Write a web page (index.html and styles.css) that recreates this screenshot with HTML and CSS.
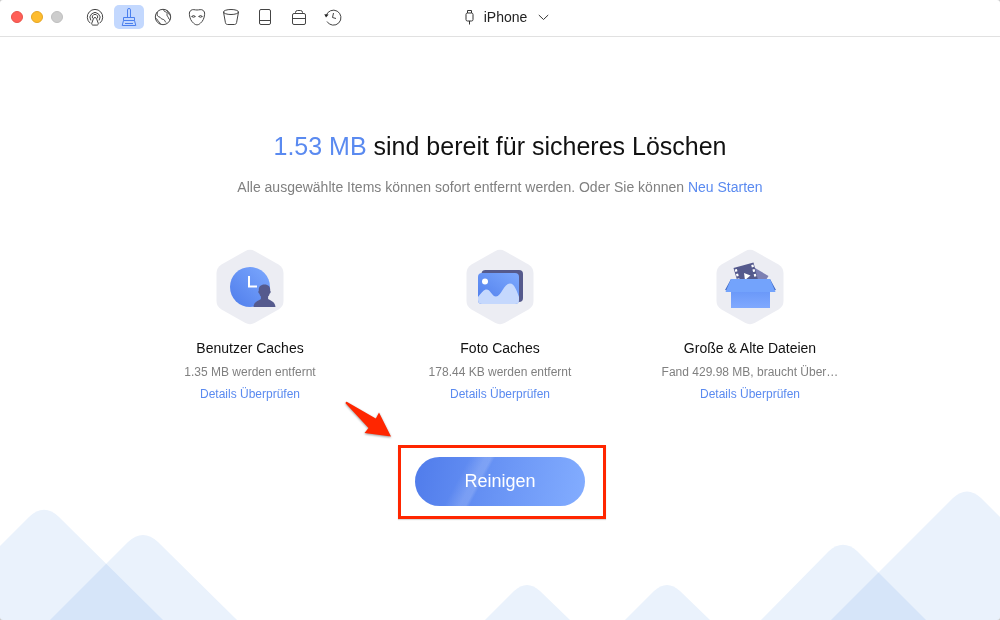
FILE: index.html
```html
<!DOCTYPE html>
<html lang="de">
<head>
    <meta charset="UTF-8">
    <meta name="viewport" content="width=device-width, initial-scale=1.0">
    <title>iPhone Cleaner</title>
    <link rel="stylesheet" href="styles.css">
</head>
<body>
    <div class="window">
        <header class="titlebar">
            <div class="titlebar-left">
                <div class="lights">
                    <button class="light close" aria-label="Schließen"></button>
                    <button class="light minimize" aria-label="Minimieren"></button>
                    <button class="light zoom" aria-label="Zoomen" disabled></button>
                </div>
                <nav class="tools">
                    <button class="tool" aria-label="AirDrop">
                        <svg viewBox="0 0 18 18"><path d="M4.300 15.200a7.700 7.700 0 1 1 9.400 0M4.900 12.400a5 5 0 1 1 8.200 0"/><path d="M6.600 10.300a2.700 2.700 0 1 1 4.800 0"/><path d="M9 9.500c.8 0 1.300.5 1.600 1.300l1.600 4.300c.4 1.200-.3 2-1.300 2H7.100c-1 0-1.700-.8-1.300-2l1.600-4.300c.3-.8.8-1.300 1.600-1.300z"/></svg>
                    </button>
                    <button class="tool active" aria-label="Bereinigen">
                        <svg viewBox="0 0 18 18"><path d="M7.500 9.500V1.800q0-1.300 1.500-1.300t1.500 1.300v7.700M3.500 9.500h11v3h-11zM3.500 12.500l-1.300 5h13.600l-1.300-5M5 15.500h8"/></svg>
                    </button>
                    <button class="tool" aria-label="Internet">
                        <svg viewBox="0 0 18 18"><circle cx="9" cy="9" r="7.700"/><path d="M10 1.300c-.6 1.300.1 2.200 1.500 2.500 1.500.3 1.800 1.200 1.500 2.400-.3 1.500.7 2.200 1.300 3.300.5 1 .6 2 1.500 2.300M12.800 2.200c.1 1.300 1.500 1.800 1.700 3 .1 1 .9 1.700 1.900 2"/><path d="M3.200 4c.2 1.800-.4 2.500.3 3.800.8 1.300 2.500.8 3.200 2.200.7 1.300 1.800 1 3 1.600 1.500.8 1.200 2 2.300 2.900M1.500 10.500c1 .1 2 .9 2.300 2 .3 1.200 1.500 1.200 2 2.200l.5 1.300"/></svg>
                    </button>
                    <button class="tool" aria-label="Privatsphäre">
                        <svg viewBox="0 0 18 18"><path d="M3 2.300c1.700-1.300 3.900-.3 6-.3s4.300-1 6 .3c1.200.9 1.800 2.200 1.600 4-.3 4-1.800 7-4.300 9-1.300 1.200-2.100 1.500-3.300 1.500s-2-.3-3.300-1.500c-2.500-2-4-5-4.300-9-.2-1.800.4-3.100 1.600-4z"/><path d="M3.600 8.500q1.900-1.900 3.800 0-1.900 1.400-3.800 0zM10.600 8.500q1.900-1.900 3.800 0-1.900 1.400-3.800 0z"/></svg>
                    </button>
                    <button class="tool" aria-label="Deinstallieren">
                        <svg viewBox="0 0 18 18"><ellipse cx="9" cy="4" rx="7.500" ry="2.500"/><path d="M1.500 4l1.900 10.500c.2 1.300 1 2 2.200 2h6.800c1.200 0 2-.7 2.200-2L16.500 4"/></svg>
                    </button>
                    <button class="tool" aria-label="Gerät">
                        <svg viewBox="0 0 18 18"><rect x="3.500" y="1.500" width="11" height="15" rx="1.500"/><path d="M3.500 12.500h11"/></svg>
                    </button>
                    <button class="tool" aria-label="Werkzeuge">
                        <svg viewBox="0 0 18 18"><rect x="2.500" y="5.500" width="13" height="11" rx="1.500"/><path d="M5.500 5.500v-1q0-2 2-2h3q2 0 2 2v1M2.500 10.500h13"/></svg>
                    </button>
                    <button class="tool" aria-label="Verlauf">
                        <svg viewBox="0 0 18 18"><path d="M2.200 7.700A7.500 7.500 0 1 1 3 13.500M9.500 5L8.500 9.500l3.500 1"/><path class="tip" d="M.3 6.300l4.300.2-2.600 3z"/></svg>
                    </button>
                </nav>
            </div>
            <button class="device">
                <svg class="plug" viewBox="0 0 9 16"><rect x="1" y="4" width="7" height="8" rx="1.500"/><path d="M2.500 4V1.500h4V4M4.500 12v3.500"/></svg>
                <span>iPhone</span>
                <svg class="chevron" viewBox="0 0 11 7"><path d="M.8 1l4.700 4.500L10.200 1"/></svg>
            </button>
        </header>

        <main class="content">
            <h1><span class="size">1.53 MB</span> sind bereit für sicheres Löschen</h1>
            <p class="hint">Alle ausgewählte Items können sofort entfernt werden. Oder Sie können <a href="#">Neu Starten</a></p>

            <div class="results">
                <section class="result">
                    <svg class="badge" viewBox="0 0 68 76">
                        <defs>
                            <linearGradient id="blue" x1="0" y1="1" x2="1" y2="0"><stop offset="0" stop-color="#4f7deb"/><stop offset="1" stop-color="#7ca8fe"/></linearGradient>
                        </defs>
                        <path class="hex" d="M29 2.200Q34-.6 39 2.200L62.500 15.500Q67.500 18.500 67.500 24V52Q67.500 57.500 62.500 60.500L39 73.800Q34 76.600 29 73.800L5.500 60.500Q.5 57.500.5 52V24Q.5 18.500 5.500 15.500z"/>
                        <circle cx="34" cy="38" r="20" fill="url(#blue)"/>
                        <path d="M33 27v10.500h8" fill="none" stroke="#fff" stroke-width="2"/>
                        <path class="dark" d="M48.500 35.500c4.200 0 6 2.600 5.700 6.200.9.500.5 2.600-.6 3-.3 1.300-.8 2.200-1.500 2.900v2.300c2 1.600 6.900 2.200 7.400 8.100H37.500c.5-5.900 5.400-6.500 7.400-8.100v-2.300c-.7-.7-1.200-1.600-1.500-2.900-1.100-.4-1.500-2.500-.6-3-.3-3.600 1.500-6.200 5.700-6.200z"/>
                    </svg>
                    <h2>Benutzer Caches</h2>
                    <p>1.35 MB werden entfernt</p>
                    <a href="#">Details Überprüfen</a>
                </section>
                <section class="result">
                    <svg class="badge" viewBox="0 0 68 76">
                        <path class="hex" d="M29 2.200Q34-.6 39 2.200L62.500 15.500Q67.500 18.500 67.500 24V52Q67.500 57.500 62.500 60.500L39 73.800Q34 76.600 29 73.800L5.500 60.500Q.5 57.500.5 52V24Q.5 18.500 5.500 15.500z"/>
                        <rect class="dark" x="15.500" y="21" width="41.500" height="32" rx="4"/>
                        <rect x="12" y="24" width="41" height="31" rx="4" fill="url(#blue)"/>
                        <path d="M12 48c4-5 6-7.500 8.500-7.500 4 0 5.500 7 9.500 7 5 0 8-13 14-13 4.500 0 7 8 9 13.500v3q0 4-4 4H16q-4 0-4-4z" fill="#c5d8fd"/>
                        <circle cx="19" cy="32.500" r="3" fill="#fff"/>
                    </svg>
                    <h2>Foto Caches</h2>
                    <p>178.44 KB werden entfernt</p>
                    <a href="#">Details Überprüfen</a>
                </section>
                <section class="result">
                    <svg class="badge" viewBox="0 0 68 76">
                        <defs>
                            <linearGradient id="box" x1="0" y1="0" x2="0" y2="1"><stop offset="0" stop-color="#6796f8"/><stop offset="1" stop-color="#80a9fe"/></linearGradient>
                        </defs>
                        <path class="hex" d="M29 2.200Q34-.6 39 2.200L62.500 15.500Q67.500 18.500 67.500 24V52Q67.500 57.500 62.500 60.500L39 73.800Q34 76.600 29 73.800L5.500 60.500Q.5 57.500.5 52V24Q.5 18.500 5.500 15.500z"/>
                        <path d="M39 19l13.500 8-5 8H33z" fill="#7d80b3"/>
                        <path class="dark" d="M17.500 19L37.500 13.500 42 31H21z"/>
                        <path d="M19.800 20.200l1.200 4.600 1.200 4.600 1 3.600M36.300 15.700l1.200 4.600 1.200 4.600 1.200 4.600" fill="none" stroke="#fff" stroke-width="2.200" stroke-dasharray="2.500 2.300"/>
                        <path d="M28 24l6.500 2.500L29 31z" fill="#fff"/>
                        <path d="M15 30L9 41l4 1 3-8zM54 30l6 11-4 1-3-8z" fill="#416ac5"/>
                        <path d="M15 40h39v19H15z" fill="url(#box)"/>
                        <path d="M15 30h39l5.500 13h-50z" fill="#73a3fc"/>
                    </svg>
                    <h2>Große &amp; Alte Dateien</h2>
                    <p>Fand 429.98 MB, braucht Über…</p>
                    <a href="#">Details Überprüfen</a>
                </section>
            </div>

            <div class="callout">
                <button class="clean">Reinigen</button>
                <svg class="arrow" viewBox="0 0 52 42"><path d="M4 2.500Q2 .8 1.500 3.200L24.500 28 20.500 33 47 36.500 35 12.500 31.800 18.500z"/></svg>
            </div>
        </main>

        <svg class="mountains" viewBox="0 480 1000 140" aria-hidden="true">
            <path d="M0 620V546L29 517Q44 502.500 59 517L163 620z"/>
            <path d="M50 620L128 542Q143 528 158 542L237 620z"/>
            <path d="M485 620L514 591Q527 579 540 591L570 620z"/>
            <path d="M625 620L654 591Q667 579 680 591L710 620z"/>
            <path d="M761 620L829 551Q843 538.500 857 551L926 620z"/>
            <path d="M831 620L953 498Q967 485 981 498L1000 517V620z"/>
        </svg>
    </div>
</body>
</html>
```
FILE: styles.css
```css
* { box-sizing: border-box; }
body { margin: 0; background: #c8c8c8; font-family: "Liberation Sans", Arial, sans-serif; color: #111; }
button { font-family: inherit; border: none; padding: 0; background: none; cursor: pointer; }
a { color: #5a8af0; text-decoration: none; }
h1, h2, p { margin: 0; }
svg { display: block; }

.window { position: relative; display: flex; flex-direction: column; min-height: 100vh; background: #fff; border-radius: 3px; overflow: hidden; }

/* title bar */
.titlebar { display: grid; grid-template-columns: 1fr auto 1fr; align-items: center; border-bottom: 1px solid #e1e1e1; padding: 5px 0 7px; }
.titlebar-left { display: flex; align-items: center; gap: 17px; padding-left: 11px; }
.lights { display: flex; gap: 8px; }
.light { width: 12px; height: 12px; border-radius: 50%; }
.close { background: #ff5f57; border: 1px solid #e9524a; }
.minimize { background: #febc2e; border: 1px solid #e5a624; }
.zoom { background: #cdcdcd; border: 1px solid #bfbfbf; }
.tools { display: flex; gap: 4px; }
.tool { display: flex; align-items: center; justify-content: center; width: 30px; height: 24px; border-radius: 5px; }
.tool svg { width: 18px; height: 18px; fill: none; stroke: #444; stroke-width: 1; }
.tool .tip { fill: #222; stroke: none; }
.tool.active { background: #c3d8fe; }
.tool.active svg { stroke: #4a7fee; }
.device { display: flex; align-items: center; margin-left: 14px; font-size: 14px; color: #222; }
.device svg { fill: none; stroke: #333; }
.plug { width: 9px; height: 16px; margin-right: 10px; }
.chevron { width: 11px; height: 7px; margin-left: 11px; }

/* result page */
.content { position: relative; z-index: 1; display: flex; flex-direction: column; align-items: center; padding-top: 93px; }
h1 { font-size: 25px; line-height: 32px; font-weight: 300; }
.size { color: #5a8af0; }
.hint { margin-top: 16px; font-size: 14px; line-height: 18px; color: #808080; }
.results { display: grid; grid-template-columns: repeat(3, 1fr); width: 75%; margin-top: 53px; }
.result { display: flex; flex-direction: column; align-items: center; min-width: 0; font-size: 12px; line-height: 16px; }
.badge { width: 68px; height: 76px; }
.hex { fill: #ecedf3; }
.dark { fill: #555a8d; }
.result h2 { margin-top: 14px; font-size: 14px; line-height: 18px; font-weight: 400; }
.result p { margin-top: 7px; color: #808080; white-space: nowrap; }
.result a { margin-top: 6px; }

.callout { position: relative; margin: 43px 0 0 4px; padding: 9px 18px 10px 14px; border: 3px solid #ff2600; box-shadow: 0 1px 1px rgba(0,0,0,0.15); }
.clean { width: 170px; height: 49px; border-radius: 25px; font-size: 18px; color: #fff; background: linear-gradient(118deg, transparent 28%, rgba(255,255,255,0.16) 36%, rgba(255,255,255,0.16) 39%, transparent 41%), linear-gradient(100deg, #507ceb, #83adff); }
.arrow { position: absolute; left: -57px; top: -48px; width: 52px; height: 42px; fill: #ff2600; filter: drop-shadow(0 1px 1px rgba(0,0,0,0.4)); }

.mountains { position: absolute; left: 0; bottom: 0; width: 100%; fill: #eaf2fc; mix-blend-mode: multiply; }
.mountains path { mix-blend-mode: multiply; }
```
